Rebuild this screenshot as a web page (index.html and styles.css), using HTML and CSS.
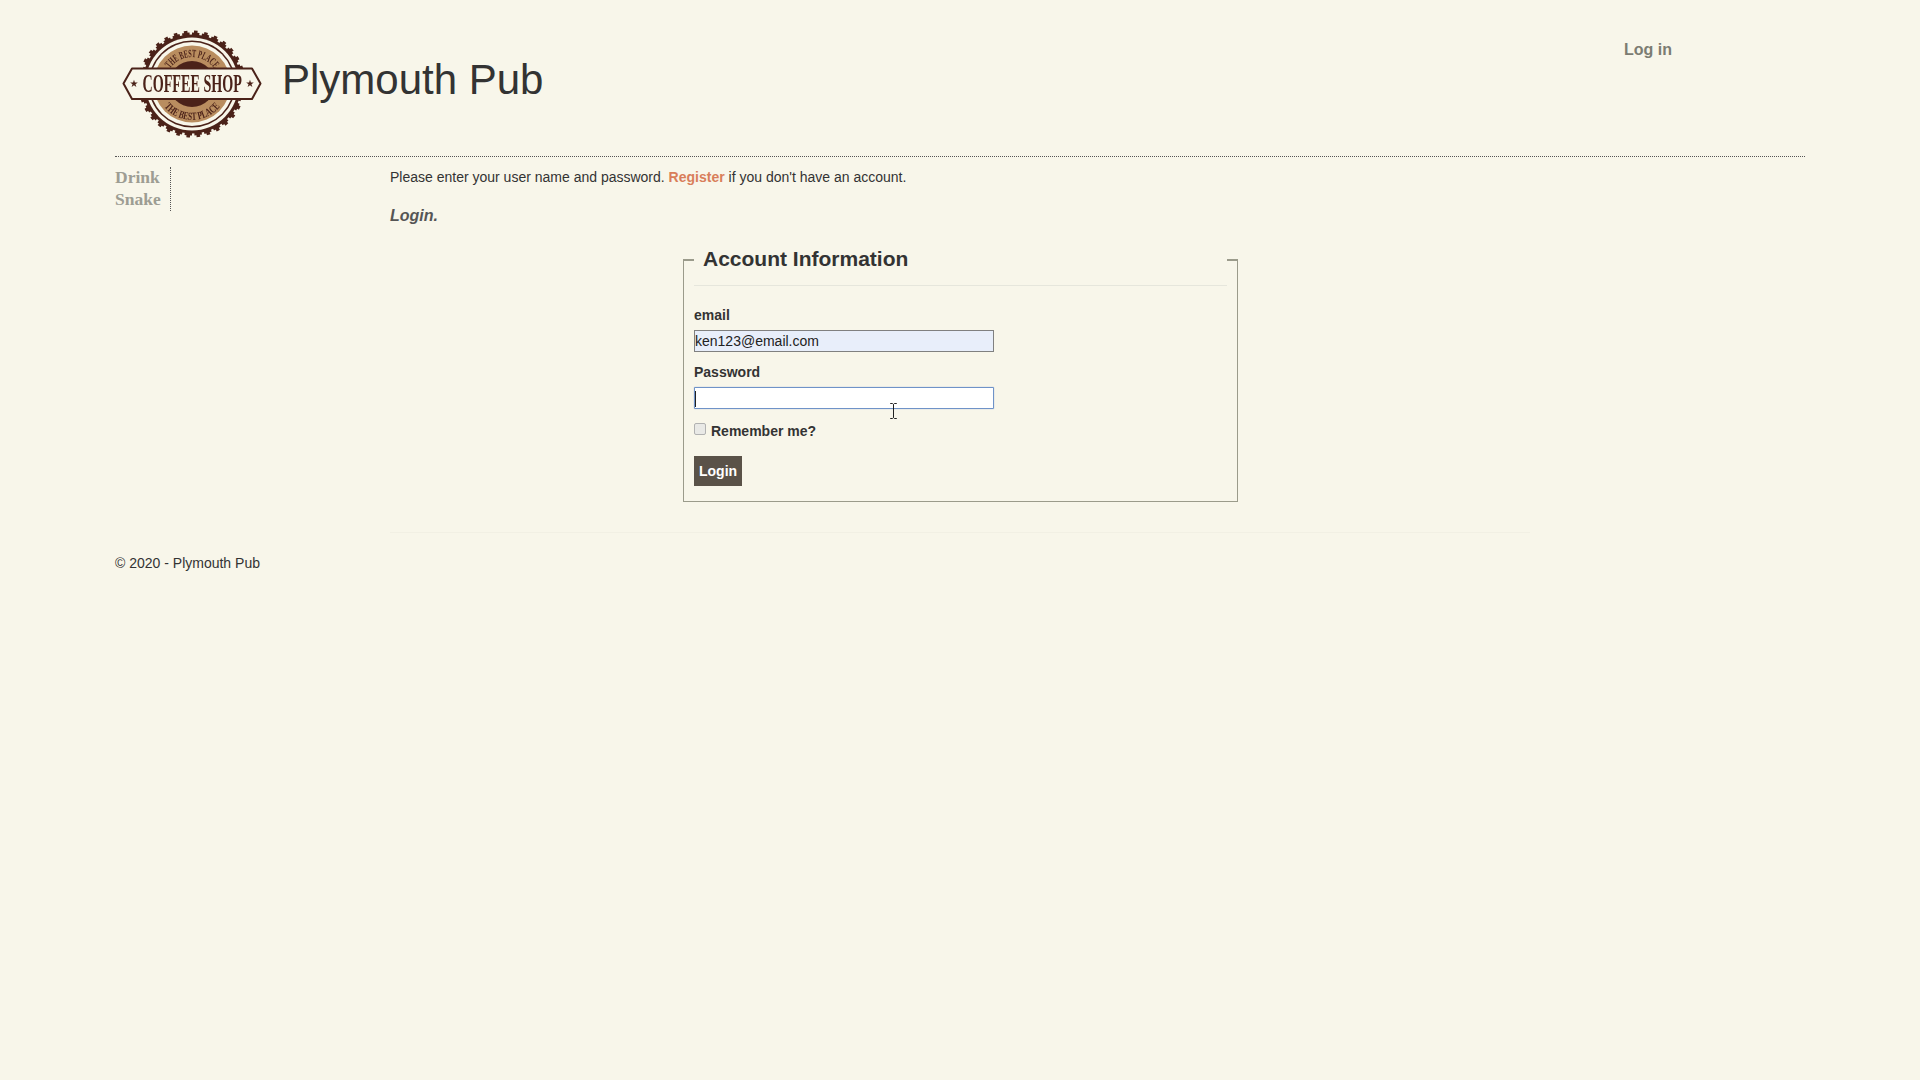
FILE: index.html
```html
<!DOCTYPE html>
<html lang="en">
<head>
    <meta charset="UTF-8">
    <title>Log in - Plymouth Pub</title>
    <link rel="stylesheet" href="styles.css">
</head>
<body>
    <div class="page">
        <header class="site-header">
            <svg class="logo" viewBox="0 0 140 108" role="img" aria-label="Coffee Shop logo">
                <defs>
                    <path id="arcTop" d="M43 54 A27 27 0 0 1 97 54"/>
                    <path id="arcBottom" d="M34 54 A36 36 0 0 0 106 54"/>
                </defs>
                <circle class="logo-teeth" cx="70" cy="54" r="49.5" pathLength="64"/>
                <circle class="logo-teeth-tip" cx="70" cy="54" r="52" pathLength="64"/>
                <circle class="logo-dark" cx="70" cy="54" r="49.5"/>
                <circle class="logo-bg" cx="70" cy="54" r="46.5"/>
                <circle class="logo-dark" cx="70" cy="54" r="43.5"/>
                <circle class="logo-bg" cx="70" cy="54" r="42"/>
                <circle class="logo-tan" cx="70" cy="54" r="38.5"/>
                <circle class="logo-dark" cx="70" cy="54" r="23"/>
                <text class="logo-curve"><textPath href="#arcTop" startOffset="50%" textLength="52" lengthAdjust="spacingAndGlyphs">THE BEST PLACE</textPath></text>
                <text class="logo-curve"><textPath href="#arcBottom" startOffset="50%" textLength="64" lengthAdjust="spacingAndGlyphs">THE BEST PLACE</textPath></text>
                <polygon class="logo-band" points="1.5,53.5 10,38.5 130,38.5 138.5,53.5 130,69 10,69"/>
                <text class="logo-name" transform="translate(20.5 61.5) scale(.566 1)">COFFEE SHOP</text>
                <text class="logo-star" x="12" y="57">★</text>
                <text class="logo-star" x="128" y="57">★</text>
            </svg>
            <h1 class="site-title">Plymouth Pub</h1>
            <a class="login-link" href="#">Log in</a>
        </header>

        <div class="content-row">
            <nav class="side-nav">
                <a href="#">Drink</a>
                <a href="#">Snake</a>
            </nav>
            <main class="main">
                <p class="intro">Please enter your user name and password. <a href="#">Register</a> if you don't have an account.</p>
                <p class="page-note">Login.</p>

                <form class="account-form">
                    <fieldset class="account-box">
                        <legend>Account Information</legend>
                        <label class="field-label" for="email">email</label>
                        <input class="text-input filled" id="email" type="text" value="ken123@email.com">
                        <label class="field-label" for="password">Password</label>
                        <div class="input-wrap">
                            <input class="text-input focused" id="password" type="password">
                            <span class="caret"></span>
                            <svg class="ibeam" viewBox="0 0 9 17"><path d="M1 .5h2.5l1 1 1-1H8M4.5 1.5v14M1 16.5h2.5l1-1 1 1H8"/></svg>
                        </div>
                        <div class="remember">
                            <input class="check" id="remember" type="checkbox">
                            <label for="remember">Remember me?</label>
                        </div>
                        <button class="login-button" type="button">Login</button>
                    </fieldset>
                </form>
            </main>
        </div>

        <div class="footer-rule"></div>
        <footer class="site-footer">© 2020 - Plymouth Pub</footer>
    </div>
</body>
</html>
```

FILE: styles.css
```css
body {
    margin: 0;
    background-color: #f8f6ea;
    color: #333;
    font-family: "Liberation Sans", Arial, sans-serif;
    font-size: 14px;
}
a {
    text-decoration: none;
}
.page {
    margin: 0 115px;
}

/* header */
.site-header {
    display: flex;
    align-items: flex-start;
    height: 156px;
    border-bottom: 1px dotted #555;
}
.logo {
    width: 140px;
    height: 108px;
    margin: 30px 0 0 7px;
    flex: none;
    filter: blur(.5px);
}
.logo-teeth {
    fill: none;
    stroke: #4b2219;
    stroke-width: 4;
    stroke-dasharray: 1.5 .5;
}
.logo-teeth-tip {
    fill: none;
    stroke: #4b2219;
    stroke-width: 3;
    stroke-dasharray: .7 1.3;
    stroke-dashoffset: -.4;
}
.logo-dark {
    fill: #4b2219;
}
.logo-bg {
    fill: #f8f6ea;
}
.logo-tan {
    fill: #b98d5f;
}
.logo-curve {
    fill: #4b2219;
    font-family: "Liberation Serif", serif;
    font-size: 11px;
    font-weight: bold;
    text-anchor: middle;
}
.logo-band {
    fill: #f8f6ea;
    stroke: #4b2219;
    stroke-width: 2;
    stroke-linejoin: round;
}
.logo-name {
    fill: #4b2219;
    font-family: "Liberation Serif", serif;
    font-size: 25px;
    font-weight: bold;
}
.logo-star {
    fill: #4b2219;
    font-family: "DejaVu Sans", sans-serif;
    font-size: 10px;
    text-anchor: middle;
}
.site-title {
    margin: 55px 0 0 20px;
    font-size: 42px;
    font-weight: normal;
    line-height: 50px;
    color: #333;
}
.login-link {
    margin: 40px 133px 0 auto;
    font-size: 16px;
    line-height: 20px;
    font-weight: bold;
    color: #7c7c72;
}

/* left nav + content */
.content-row {
    display: flex;
    align-items: flex-start;
}
.side-nav {
    display: flex;
    flex-direction: column;
    width: 55px;
    margin-top: 10px;
    padding-bottom: 1px;
    border-right: 1px dotted #555;
}
.side-nav a {
    font-family: "Liberation Serif", serif;
    font-size: 17.5px;
    font-weight: bold;
    line-height: 22px;
    color: #9d9d93;
}
.side-nav a:first-child {
    margin-top: -1px;
}
.main {
    flex: 1;
    margin-left: 219px;
    padding-top: 10px;
}
.intro {
    margin: 0;
    line-height: 21px;
}
.intro a {
    font-weight: bold;
    color: #d97e5a;
}
.page-note {
    margin: 18px 0 0;
    font-size: 16px;
    line-height: 20px;
    font-weight: bold;
    font-style: italic;
    color: #555;
}

/* login form */
.account-form {
    margin-top: 8px;
    margin-left: 293px;
    width: 555px;
}
.account-box {
    margin: 0;
    padding: 0 10px 15px;
    border: 1px solid #9b9b8b;
    border-top-width: 2px;
}
.account-box legend {
    box-sizing: border-box;
    width: 100%;
    height: 52px;
    padding: 12px 0 0 9px;
    font-size: 21px;
    font-weight: bold;
    line-height: 26px;
    color: #333;
    border-bottom: 1px solid #e6e6dc;
}
.field-label {
    display: block;
    font-weight: bold;
    line-height: 20px;
}
.account-box legend + .field-label {
    margin-top: 19px;
}
.text-input {
    display: block;
    box-sizing: border-box;
    width: 300px;
    height: 22px;
    margin: 5px 0 10px;
    padding: 0;
    border: 1px solid #808080;
    border-radius: 0;
    outline: none;
    font-family: "Liberation Sans", Arial, sans-serif;
    font-size: 14px;
    color: #222;
}
.text-input.filled {
    background-color: #e8eefa;
}
.text-input.focused {
    background-color: #fff;
    border-color: #6f93c8;
    border-radius: 1px;
    box-shadow: 0 0 1px #6f93c8;
}
.input-wrap {
    position: relative;
}
.caret {
    position: absolute;
    left: 1px;
    top: 4px;
    width: 1px;
    height: 16px;
    background-color: #222;
}
.ibeam {
    position: absolute;
    left: 195px;
    top: 16px;
    width: 9px;
    height: 16px;
    fill: none;
    stroke: #111;
    stroke-width: 1;
}
.remember {
    display: flex;
    align-items: center;
    gap: 5px;
    margin-top: 12px;
    font-weight: bold;
    line-height: 20px;
}
.check {
    appearance: none;
    box-sizing: border-box;
    width: 12px;
    height: 12px;
    margin: -4px 0 0;
    border: 1px solid #b2b2b2;
    border-radius: 2px;
    background-color: #e9e9e6;
}
.login-button {
    display: block;
    height: 30px;
    margin-top: 15px;
    padding: 0 5px;
    border: none;
    background-color: #5a5248;
    color: #fff;
    font-family: "Liberation Sans", Arial, sans-serif;
    font-size: 14px;
    font-weight: bold;
}

/* footer */
.footer-rule {
    margin: 30px 275px 0 275px;
    border-top: 1px solid #f2f0e4;
}
.site-footer {
    margin-top: 20px;
    line-height: 20px;
}
```
